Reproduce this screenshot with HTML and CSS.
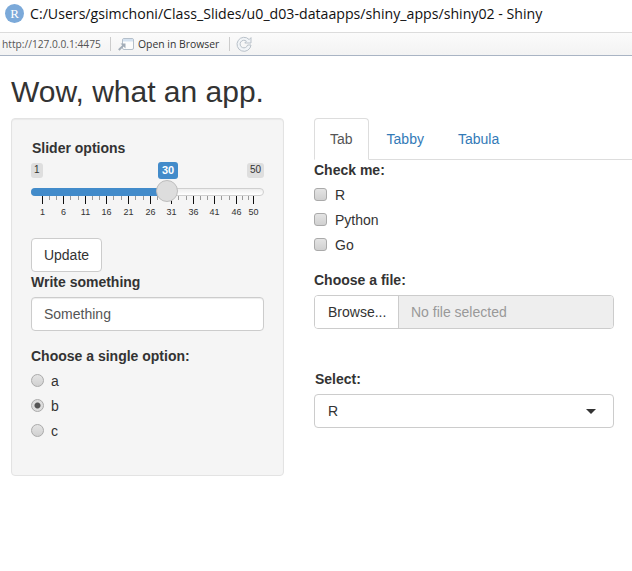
FILE: index.html
```html
<!DOCTYPE html>
<html lang="en">
<head>
<meta charset="utf-8">
<title>Shiny</title>
<link rel="stylesheet" href="styles.css">
</head>
<body>
<header class="titlebar">
  <span class="r-logo">R</span>
  <span class="title-text">C:/Users/gsimchoni/Class_Slides/u0_d03-dataapps/shiny_apps/shiny02 - Shiny</span>
</header>
<div class="toolbar">
  <span class="url">http://127.0.0.1:4475</span>
  <span class="sep"></span>
  <svg class="open-icon" width="17" height="14" viewBox="0 0 17 14"><rect x="4.5" y="1.5" width="11" height="11" rx="1.5" fill="#fdfdfd" stroke="#b4bfca"/><path d="M5 2h10v2.5H5z" fill="#d5e2f0"/><path d="M0.8 13l4.4-4.4" fill="none" stroke="#a3adb8" stroke-width="2"/><path d="M2.5 6.5h5v5z" fill="#a3adb8"/></svg>
  <span class="open-text">Open in Browser</span>
  <span class="sep"></span>
  <svg class="refresh-icon" width="16" height="16" viewBox="0 0 16 16"><path d="M13.2 3.6A7 7 0 1 0 15 9H11.6A3.8 3.8 0 1 1 10.4 5.2L8.8 7H15V1.6z" fill="#f1f4f7" stroke="#b9c1c9"/></svg>
</div>
<main class="page">
  <h1 class="app-title">Wow, what an app.</h1>
  <div class="columns">
    <aside class="well">
      <label class="label slider-label">Slider options</label>
      <div class="slider">
        <span class="bubble bubble-min">1</span>
        <span class="bubble bubble-val">30</span>
        <span class="bubble bubble-max">50</span>
        <div class="track"><div class="track-fill"></div></div>
        <svg class="ticks" width="233" height="9" viewBox="0 0 233 9">
          <path d="M11.5 0v8M32.5 0v8M54.5 0v8M75.5 0v8M97.5 0v8M119.5 0v8M140.5 0v8M162.5 0v8M183.5 0v8M205.5 0v8M222.5 0v8" stroke="#111" fill="none"/>
          <path d="M18.5 0v4M25.5 0v4M39.5 0v4M47.5 0v4M61.5 0v4M68.5 0v4M82.5 0v4M90.5 0v4M104.5 0v4M112.5 0v4M126.5 0v4M133.5 0v4M147.5 0v4M155.5 0v4M169.5 0v4M176.5 0v4M190.5 0v4M198.5 0v4M211.5 0v4M217.5 0v4" stroke="#999" fill="none"/>
        </svg>
        <div class="handle"></div>
        <span class="tick-label" style="left:11.5px">1</span>
        <span class="tick-label" style="left:32.5px">6</span>
        <span class="tick-label" style="left:54.5px">11</span>
        <span class="tick-label" style="left:75.5px">16</span>
        <span class="tick-label" style="left:97.5px">21</span>
        <span class="tick-label" style="left:119.5px">26</span>
        <span class="tick-label" style="left:140.5px">31</span>
        <span class="tick-label" style="left:162.5px">36</span>
        <span class="tick-label" style="left:183.5px">41</span>
        <span class="tick-label" style="left:205.5px">46</span>
        <span class="tick-label" style="left:222.5px">50</span>
      </div>
      <button class="btn update-btn" type="button">Update</button>
      <label class="label write-label">Write something</label>
      <input class="text-input" type="text" value="Something">
      <div class="label radio-heading">Choose a single option:</div>
      <div class="option-list">
        <label class="option"><input class="radio" type="radio" name="opt"><span>a</span></label>
        <label class="option"><input class="radio" type="radio" name="opt" checked><span>b</span></label>
        <label class="option"><input class="radio" type="radio" name="opt"><span>c</span></label>
      </div>
    </aside>
    <section class="main-panel">
      <nav class="tabs">
        <a class="tab tab-active">Tab</a>
        <a class="tab">Tabby</a>
        <a class="tab">Tabula</a>
      </nav>
      <div class="tab-body">
        <div class="label check-heading">Check me:</div>
        <div class="option-list">
          <label class="option"><input class="check" type="checkbox"><span>R</span></label>
          <label class="option"><input class="check" type="checkbox"><span>Python</span></label>
          <label class="option"><input class="check" type="checkbox"><span>Go</span></label>
        </div>
        <label class="label file-label">Choose a file:</label>
        <div class="file-group">
          <span class="browse">Browse...</span>
          <span class="file-name">No file selected</span>
        </div>
        <label class="label select-label">Select:</label>
        <div class="select-box"><span>R</span><span class="caret"></span></div>
      </div>
    </section>
  </div>
</main>
</body>
</html>
```

FILE: styles.css
```css
* { box-sizing: border-box; }
html, body { margin: 0; padding: 0; background: #fff; }
body { font-family: "Liberation Sans", Arial, sans-serif; font-size: 14px; line-height: 20px; color: #333; height: 571px; overflow: hidden; }

.titlebar { display: flex; align-items: center; height: 32px; padding: 0 0 5px 5px; background: #fff; }
.r-logo { width: 19px; height: 19px; border-radius: 50%; background: #7ba9d9; color: #fff; font-family: "Liberation Serif", serif; font-size: 13px; line-height: 19px; text-align: center; margin-right: 6px; }
.title-text { font-family: "Open Sans", sans-serif; font-size: 14.17px; line-height: 20px; color: #111; white-space: nowrap; }

.toolbar { display: flex; align-items: center; height: 24px; border-top: 1px solid #dcdcdc; border-bottom: 1px solid #a9b4c4; background: linear-gradient(#fbfbfb, #f3f3f3); padding-left: 2px; }
.url { font-family: "Open Sans", sans-serif; font-size: 10.2px; color: #555; width: 108px; white-space: nowrap; }
.sep { width: 1px; height: 14px; background: #ccc; }
.open-icon { margin-left: 7px; }
.open-text { font-family: "Open Sans", sans-serif; font-size: 10.4px; color: #333; margin-left: 3px; width: 91px; white-space: nowrap; }
.refresh-icon { margin-left: 6px; }

.page { padding: 0 18px 0 11px; }
.app-title { margin: 19px 0 10px; font-size: 30px; font-weight: 500; line-height: 33px; color: #333; }
.columns { display: grid; grid-template-columns: 273px 300px; column-gap: 30px; align-items: start; }

.well { height: 358px; padding: 19px 19px 19px 20px; background: #f5f5f5; border: 1px solid #e3e3e3; border-radius: 4px; box-shadow: inset 0 1px 1px rgba(0,0,0,.05); }
.label { display: block; font-weight: 700; color: #333; }
.slider { position: relative; height: 80px; margin: 0 0 0 -1px; width: 233px; }
.bubble { position: absolute; top: 5px; font-size: 10px; line-height: 12px; padding: 1px 3px; border-radius: 3px; background: #dedede; color: #333; height: 15px; }
.bubble-min { left: 0; }
.bubble-val { left: 127px; top: 4px; height: 17px; padding: 2px 4px; font-weight: 700; font-size: 11px; background: #428bca; color: #fff; }
.bubble-max { right: 0; }
.track { position: absolute; left: 0; top: 30px; width: 233px; height: 8px; border-radius: 4px; border: 1px solid #cfcfcf; background: linear-gradient(#eee, #fff); }
.track-fill { position: absolute; left: -1px; top: -1px; width: 137px; height: 8px; border-radius: 4px 0 0 4px; background: #428bca; }
.handle { position: absolute; left: 125px; top: 22px; width: 22px; height: 22px; border-radius: 50%; background: #ddd; border: 1px solid #bdbdbd; }
.ticks { position: absolute; left: 0; top: 38px; }
.tick-label { position: absolute; top: 48px; width: 20px; margin-left: -10px; text-align: center; font-size: 9px; line-height: 12px; color: #333; }

.btn { display: block; width: 71px; height: 34px; margin-left: -1px; padding: 0; font: inherit; color: #333; background: #fff; border: 1px solid #ccc; border-radius: 4px; }
.write-label { margin: 0 0 5px -1px; }
.text-input { display: block; width: 233px; height: 34px; margin-left: -1px; padding: 6px 12px; font: inherit; color: #555; background: #fff; border: 1px solid #ccc; border-radius: 4px; box-shadow: inset 0 1px 1px rgba(0,0,0,.075); }
.radio-heading { margin: 15px 0 0 -1px; }
.well .option-list { margin-left: -1px; }
.option-list { display: flex; flex-direction: column; margin-top: 2px; }
.option { display: flex; align-items: center; height: 25px; font-weight: 400; color: #333; }
.radio, .check { appearance: none; -webkit-appearance: none; width: 13px; height: 13px; margin: 0 7px 0 0; background: linear-gradient(#e4e4e4, #d0d0d0); border: 1px solid #aaa; }
.radio { border-radius: 50%; }
.radio:checked { background: radial-gradient(circle, #555 0 2.5px, #ddd 3.5px); }
.check { border-radius: 3px; margin-right: 8px; }

.main-panel { width: 318px; }
.tabs { display: flex; height: 42px; border-bottom: 1px solid #ddd; }
.tab { display: block; height: 42px; padding: 10px 15px; margin-right: 2px; color: #337ab7; border: 1px solid transparent; border-radius: 4px 4px 0 0; }
.tab-active { color: #555; background: #fff; border-color: #ddd #ddd #fff; }
.tab-body { width: 300px; }
.file-label { margin: 13px 0 5px; }
.file-group { display: flex; height: 34px; border: 1px solid #ccc; border-radius: 4px; overflow: hidden; }
.browse { width: 84px; padding: 6px 0 0 13px; background: #fff; border-right: 1px solid #ccc; color: #333; }
.file-name { flex: 1; padding: 6px 12px; background: #eee; color: #999; }
.select-label { margin: 40px 0 5px 1px; }
.select-box { display: flex; align-items: center; justify-content: space-between; height: 34px; padding: 0 17px 0 13px; border: 1px solid #ccc; border-radius: 4px; background: #fff; color: #333; }
.caret { width: 0; height: 0; border-left: 5px solid transparent; border-right: 5px solid transparent; border-top: 5px solid #333; }
```
